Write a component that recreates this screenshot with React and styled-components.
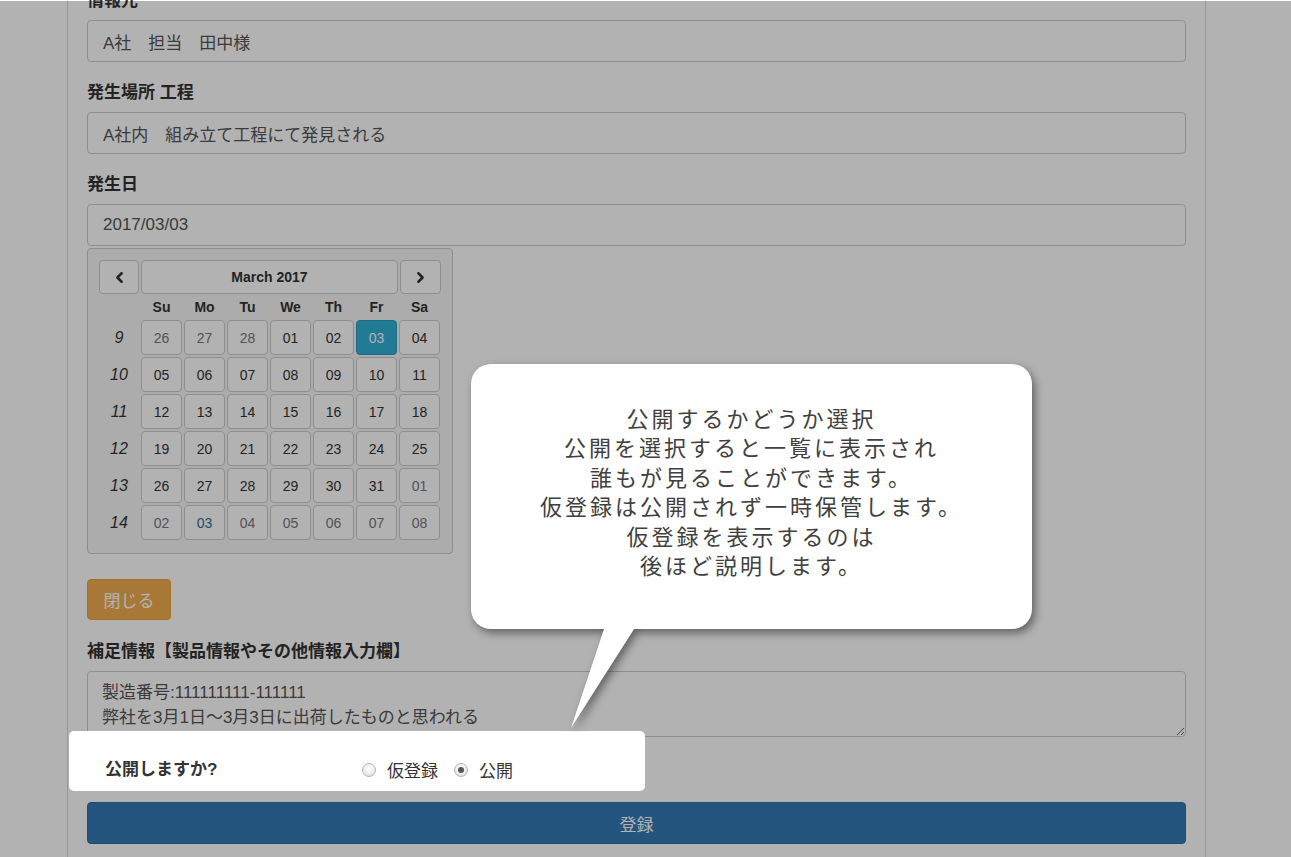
import React from "react";
import styled, { createGlobalStyle } from "styled-components";
import { ChevronLeft, ChevronRight } from "lucide-react";

const GlobalStyle = createGlobalStyle`
  html, body {
    margin: 0;
    padding: 0;
    height: 857px;
    overflow: hidden;
    background: #ffffff;
    font-family: "Liberation Sans", "Noto Sans CJK JP", sans-serif;
    color: #333;
  }
`;

const Page = styled.div`
  position: relative;
  height: 857px;
  overflow: hidden;
`;

const Container = styled.div`
  box-sizing: border-box;
  margin-left: 67px;
  width: 1139px;
  min-height: 900px;
  margin-top: -11px;
  padding: 0 19px;
  border-left: 1px solid #dddddd;
  border-right: 1px solid #dddddd;
`;

const Group = styled.div`
  display: flex;
  flex-direction: column;
  margin-bottom: ${(p) => p.mb ?? 19}px;
`;

const Label = styled.label`
  display: block;
  height: 23px;
  line-height: 23px;
  margin-bottom: 8px;
  font-size: 17px;
  font-weight: 700;
  color: #333;
`;

const Input = styled.div`
  box-sizing: border-box;
  height: 42px;
  padding: 0 15px;
  display: flex;
  align-items: center;
  border: 1px solid #cccccc;
  border-radius: 4px;
  font-size: 17px;
  color: #555;
  background: #fff;
`;

const Calendar = styled.div`
  box-sizing: border-box;
  width: 366px;
  margin: 2px 0 0 0;
  padding: 10px 10px 12px;
  background: #f7f7f7;
  border: 1px solid #cccccc;
  border-radius: 4px;
`;

const CalGrid = styled.div`
  display: grid;
  grid-template-columns: 42px repeat(7, 43px);
  grid-template-rows: 36px 24px repeat(6, 37px);
`;

const HeadRow = styled.div`
  grid-column: 1 / -1;
  display: grid;
  grid-template-columns: 42px 259px 43px;
`;

const NavBtn = styled.div`
  margin: 1px;
  border: 1px solid #cccccc;
  border-radius: 4px;
  background: #fff;
  display: flex;
  align-items: center;
  justify-content: center;
  font-size: 14px;
  font-weight: 700;
  color: #333;
`;

const Dow = styled.div`
  display: flex;
  align-items: center;
  justify-content: center;
  font-size: 14px;
  font-weight: 700;
  color: #333;
`;

const WeekNo = styled.div`
  display: flex;
  align-items: center;
  justify-content: center;
  font-size: 16px;
  font-style: italic;
  color: #333;
`;

const Day = styled.div`
  margin: 1px;
  border: 1px solid ${(p) => (p.active ? "#269abc" : "#cccccc")};
  border-radius: 4px;
  background: ${(p) => (p.active ? "#31b0d5" : "#fff")};
  display: flex;
  align-items: center;
  justify-content: center;
  font-size: 14px;
  color: ${(p) => (p.active ? "#fff" : p.today ? "#31708f" : p.muted ? "#777" : "#333")};
`;

const WarnButton = styled.button`
  align-self: flex-start;
  box-sizing: border-box;
  height: 41px;
  width: 84px;
  margin-top: 25px;
  border: 1px solid #eea236;
  border-radius: 4px;
  background: #f0ad4e;
  color: #fff;
  font-family: inherit;
  font-size: 17px;
  padding: 0;
`;

const TextArea = styled.textarea`
  box-sizing: border-box;
  height: 66px;
  padding: 8px 14px 6px;
  border: 1px solid #cccccc;
  border-radius: 4px;
  font-family: inherit;
  font-size: 17px;
  line-height: 25px;
  color: #555;
  resize: vertical;
  overflow: hidden;
`;

const HighlightRow = styled.div`
  position: relative;
  z-index: 20;
  box-sizing: border-box;
  width: 576px;
  height: 60px;
  margin: -6px 0 0 -18px;
  padding: 27px 0 0 36px;
  display: flex;
  align-items: flex-start;
  background: #fff;
  border-radius: 5px;
`;

const RowLabel = styled.div`
  width: 257px;
  height: 23px;
  line-height: 23px;
  font-size: 17px;
  font-weight: 700;
  color: #333;
`;

const RadioGroup = styled.div`
  display: flex;
  align-items: center;
  height: 23px;
  gap: 16px;
`;

const RadioItem = styled.label`
  display: flex;
  align-items: center;
  gap: 11px;
  font-size: 17px;
  color: #333;
`;

const RadioDot = styled.span`
  box-sizing: border-box;
  width: 14px;
  height: 14px;
  border-radius: 50%;
  border: 1px solid #b5b5b5;
  background: radial-gradient(circle at 50% 35%, #ffffff 0%, #f0f0f0 45%, #d6d6d6 100%);
  display: flex;
  align-items: center;
  justify-content: center;
  &::after {
    content: "";
    width: 6px;
    height: 6px;
    border-radius: 50%;
    background: ${(p) => (p.checked ? "#555" : "transparent")};
  }
`;

const PrimaryButton = styled.button`
  box-sizing: border-box;
  width: 100%;
  height: 42px;
  margin-top: 11px;
  border: 1px solid #2e6da4;
  border-radius: 4px;
  background: #337ab7;
  color: #fff;
  font-family: inherit;
  font-size: 17px;
`;

const Overlay = styled.div`
  position: fixed;
  inset: 1px 0 0 0;
  z-index: 10;
  background: rgba(0, 0, 0, 0.3);
`;

const Bubble = styled.div`
  position: absolute;
  left: 471px;
  top: 364px;
  width: 561px;
  height: 265px;
  z-index: 30;
  filter: drop-shadow(3px 4px 4px rgba(0, 0, 0, 0.45));
`;

const BubbleBox = styled.div`
  box-sizing: border-box;
  height: 100%;
  padding-top: 39px;
  background: #fff;
  border-radius: 20px;
  text-align: center;
  font-family: "Noto Sans CJK JP", sans-serif;
  font-weight: 400;
  font-size: 22px;
  letter-spacing: 3px;
  line-height: 29.4px;
  color: #404040;
`;

const Tail = styled.svg`
  position: absolute;
  left: 95px;
  top: 262px;
`;

const weeks = [
  [9, [["26", "m"], ["27", "m"], ["28", "m"], ["01"], ["02"], ["03", "a"], ["04"]]],
  [10, [["05"], ["06"], ["07"], ["08"], ["09"], ["10"], ["11"]]],
  [11, [["12"], ["13"], ["14"], ["15"], ["16"], ["17"], ["18"]]],
  [12, [["19"], ["20"], ["21"], ["22"], ["23"], ["24"], ["25"]]],
  [13, [["26"], ["27"], ["28"], ["29"], ["30"], ["31"], ["01", "m"]]],
  [14, [["02", "m"], ["03", "t"], ["04", "m"], ["05", "m"], ["06", "m"], ["07", "m"], ["08", "m"]]],
];

const bubbleLines = [
  "公開するかどうか選択",
  "公開を選択すると一覧に表示され",
  "誰もが見ることができます。",
  "仮登録は公開されず一時保管します。",
  "仮登録を表示するのは",
  "後ほど説明します。",
];

const App = () => {
  return (
    <Page>
      <GlobalStyle />
      <Container>
        <Group>
          <Label>情報元</Label>
          <Input>A社　担当　田中様</Input>
        </Group>
        <Group>
          <Label>発生場所 工程</Label>
          <Input>A社内　組み立て工程にて発見される</Input>
        </Group>
        <Group mb={20}>
          <Label>発生日</Label>
          <Input>2017/03/03</Input>
          <Calendar>
            <CalGrid>
              <HeadRow>
                <NavBtn>
                  <ChevronLeft size={17} strokeWidth={3.5} />
                </NavBtn>
                <NavBtn>March 2017</NavBtn>
                <NavBtn>
                  <ChevronRight size={17} strokeWidth={3.5} />
                </NavBtn>
              </HeadRow>
              <Dow />
              {["Su", "Mo", "Tu", "We", "Th", "Fr", "Sa"].map((d) => (
                <Dow key={d}>{d}</Dow>
              ))}
              {weeks.map(([no, days]) => (
                <React.Fragment key={no}>
                  <WeekNo>{no}</WeekNo>
                  {days.map(([d, f], i) => (
                    <Day key={i} muted={f === "m"} active={f === "a"} today={f === "t"}>
                      {d}
                    </Day>
                  ))}
                </React.Fragment>
              ))}
            </CalGrid>
          </Calendar>
          <WarnButton>閉じる</WarnButton>
        </Group>
        <Group mb={0}>
          <Label>補足情報【製品情報やその他情報入力欄】</Label>
          <TextArea
            readOnly
            value={"製造番号:111111111-111111\n弊社を3月1日～3月3日に出荷したものと思われる"}
          />
        </Group>
        <HighlightRow>
          <RowLabel>公開しますか?</RowLabel>
          <RadioGroup>
            <RadioItem>
              <RadioDot />
              仮登録
            </RadioItem>
            <RadioItem>
              <RadioDot checked />
              公開
            </RadioItem>
          </RadioGroup>
        </HighlightRow>
        <PrimaryButton>登録</PrimaryButton>
      </Container>
      <Overlay />
      <Bubble>
        <BubbleBox>
          {bubbleLines.map((l) => (
            <div key={l}>{l}</div>
          ))}
        </BubbleBox>
        <Tail width="72" height="104" viewBox="0 0 72 104">
          <polygon points="39,0 70,0 5,102" fill="#fff" />
        </Tail>
      </Bubble>
    </Page>
  );
};

export default App;
